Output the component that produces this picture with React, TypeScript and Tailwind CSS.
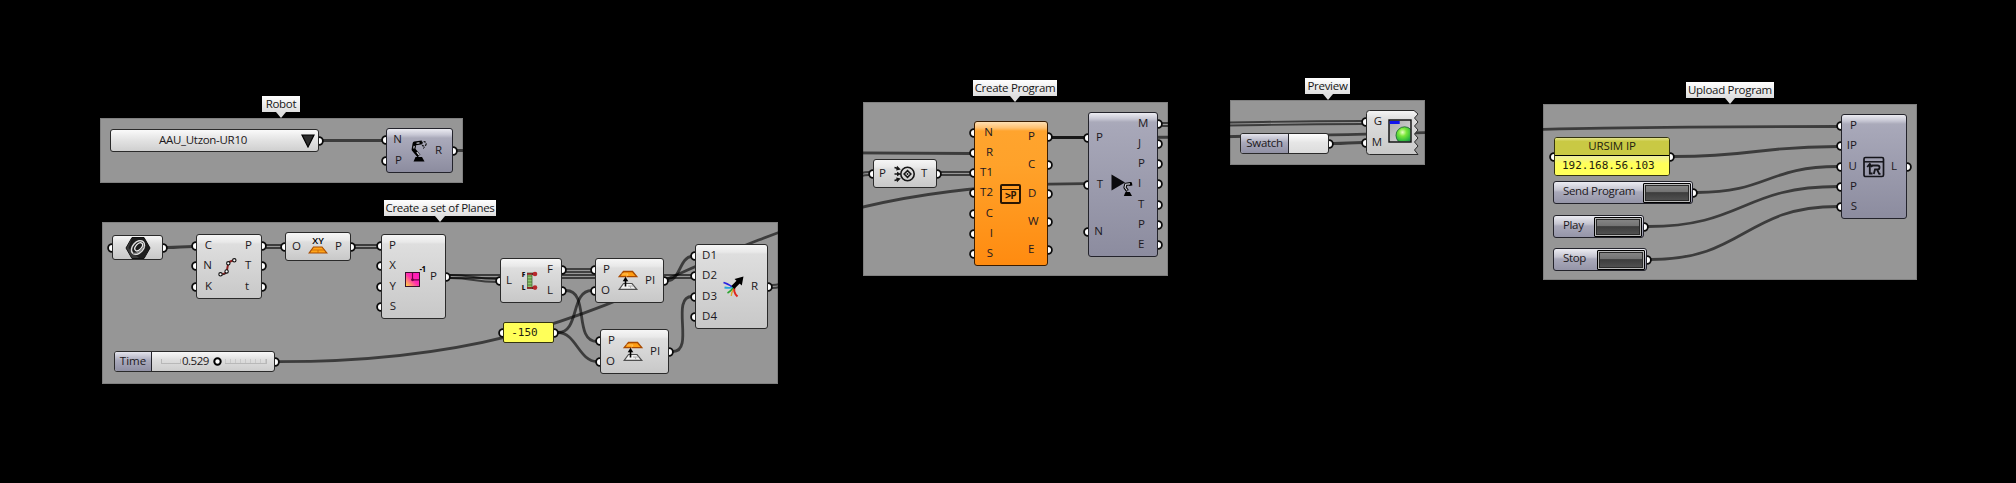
import type { ReactNode } from "react";
import { clsx } from "clsx";

const FONT = "font-['Open_Sans','Noto_Sans',sans-serif]";

type Tone = "light" | "violet" | "orange";

const TONES: Record<Tone, string> = {
  light:
    "border-[#2a2a2a] bg-[linear-gradient(180deg,#f6f6f6_0px,#e9e9e9_7px,#dedede_9px,#c8c8c8_100%)]",
  violet:
    "border-[#23232b] bg-[linear-gradient(180deg,#ececf2_0px,#c6c6d3_6px,#aaaaba_9px,#a8a8b9_12px,#8c8c9f_100%)]",
  orange:
    "border-[#3a1c00] bg-[linear-gradient(180deg,#ffe0b4_0px,#ffc070_6px,#ffa42e_9px,#ffa22a_30%,#ff8b10_100%)]",
};

function Port({ side, className }: { side: "in" | "out"; className?: string }) {
  return (
    <svg
      width="5"
      height="10"
      viewBox={side === "in" ? "0 0 5 10" : "5 0 5 10"}
      className={clsx("block shrink-0", className)}
    >
      <circle cx="5" cy="5" r="3.9" fill="#fff" stroke="#0a0a0a" strokeWidth="1.8" />
    </svg>
  );
}

function Group({ className }: { className: string }) {
  return <section className={clsx("absolute border border-[#808080] bg-[#969696]", className)} />;
}

function Tag({ className, children }: { className: string; children: string }) {
  return (
    <div className={clsx("absolute flex flex-col items-center", className)}>
      <div className="flex h-4 w-full items-center justify-center bg-gradient-to-b from-white to-[#dedede] whitespace-nowrap text-[11.5px] leading-4 tracking-[-0.3px] text-[#161616]">
        {children}
      </div>
      <svg width="12" height="6" viewBox="0 0 12 6" className="block">
        <path d="M1 0H11L6 6Z" fill="#dedede" />
      </svg>
    </div>
  );
}

type NodeProps = {
  className: string;
  tone?: Tone;
  ins?: string[];
  outs?: string[];
  inWidth?: string;
  outWidth?: string;
  children?: ReactNode;
};

function Node({
  className,
  tone = "light",
  ins = [],
  outs = [],
  inWidth = "w-[15px]",
  outWidth = "w-[15px]",
  children,
}: NodeProps) {
  return (
    <article
      className={clsx(
        "absolute flex rounded-[3px] border py-px text-[11.5px] leading-4 text-[#1c1820]",
        TONES[tone],
        className,
      )}
    >
      <div className={clsx("flex shrink-0 flex-col", inWidth)}>
        {ins.map((label, i) => (
          <div key={i} className="flex flex-1 items-center justify-between">
            <Port side="in" className="-ml-[6px]" />
            <span className="-mt-[2px]">{label}</span>
          </div>
        ))}
      </div>
      <div className="flex min-w-0 flex-1 items-center justify-center">{children}</div>
      <div className={clsx("flex shrink-0 flex-col", outWidth)}>
        {outs.map((label, i) => (
          <div key={i} className="flex flex-1 items-center justify-between">
            <span className="-mt-[2px]">{label}</span>
            <Port side="out" className="-mr-[6px]" />
          </div>
        ))}
      </div>
    </article>
  );
}

function Icon({ children, className }: { children: ReactNode; className?: string }) {
  return (
    <svg width="24" height="24" viewBox="0 0 24 24" fill="none" className={clsx("block shrink-0", className)}>
      {children}
    </svg>
  );
}

const RobotIcon = () => (
  <Icon>
    <path d="M6.5 22.5L8.5 18H15L17.5 22.5Z" fill="#000" />
    <path d="M12 17L6.5 10.5L7.5 4.5L15 3.4" stroke="#000" strokeWidth="3.8" strokeLinejoin="round" />
    <path d="M9.8 13.2L12.5 16.4M7.2 6.8L6.8 9.5M9.5 4.3L12.5 3.9" stroke="#dcdce6" strokeWidth="1.1" />
    <circle cx="17" cy="4.8" r="2.2" stroke="#111" strokeWidth="1.2" strokeDasharray="2 1" />
    <path d="M16 9.5L17.8 8" stroke="#111" />
  </Icon>
);

const DivideIcon = () => (
  <Icon>
    <path d="M3.5 19.5C8 19 9 18 9.7 16.3C10.5 13 10.6 10.5 11.5 8C12.5 6 14 6 17.5 5" stroke="#8c2020" strokeWidth="2" />
    <path d="M4 20C9 19.5 10 18 10.5 15" stroke="#222" strokeWidth=".8" />
    {[
      [3.5, 19.3],
      [9.6, 16.4],
      [11.3, 8.3],
      [17.3, 5.3],
    ].map(([x, y]) => (
      <circle key={x} cx={x} cy={y} r="1.7" fill="#fff" stroke="#111" strokeWidth="1.1" />
    ))}
  </Icon>
);

const XyIcon = () => (
  <div className="-mt-[3px] flex flex-col items-center">
    <span className="h-[10px] text-[9.5px] leading-[9px] font-semibold text-black">XY</span>
    <svg width="20" height="8" viewBox="0 0 20 8" className="block">
      <path d="M5.5 1H14L18.8 7H1.2Z" fill="#ffa51a" stroke="#a84d00" strokeWidth="1.2" />
      <path d="M3.5 4H16.5M10 4V7" stroke="#c86400" strokeWidth=".8" />
    </svg>
  </div>
);

const PlaneIcon = () => (
  <div className="flex items-start pt-[2px]">
    <svg width="17" height="17" viewBox="0 0 17 17" className="mt-[3px] block shrink-0">
      <defs>
        <linearGradient id="plane" x1="0" y1="1" x2="1" y2="0">
          <stop offset="0" stopColor="#ffe636" />
          <stop offset=".5" stopColor="#ff2cae" />
          <stop offset="1" stopColor="#ff12c0" />
        </linearGradient>
      </defs>
      <rect x="1.5" y="1.5" width="14" height="14" fill="url(#plane)" stroke="#38102c" />
      <path d="M8.5 2V8.8H15" fill="none" stroke="#6d0048" strokeWidth="1.2" />
      <circle cx="8.5" cy="8.8" r="1.4" fill="#6d0048" />
    </svg>
    <span className="-mt-[4px] -mr-[4px] -ml-[2px] text-[8px] leading-[9px] font-bold tracking-[-0.5px] text-black">-1</span>
  </div>
);

const ListIcon = () => (
  <Icon>
    <text x="3.8" y="8" fontSize="6.5" fontWeight="800" fill="#111">F</text>
    <text x="3.8" y="20.5" fontSize="6.5" fontWeight="800" fill="#111">L</text>
    <rect x="9.5" y="4" width="4.5" height="15.5" fill="#8cc56c" stroke="#4c6b3c" strokeWidth=".8" />
    <path d="M9.5 7H14M9.5 10H14M9.5 13H14M9.5 16H14" stroke="#3f6a30" strokeWidth=".8" />
    <path d="M9 4.8H16M9 18.8H16" stroke="#8e2626" strokeWidth="1.8" />
    <path d="M14 4.8H18M14 18.8H18" stroke="#5a2020" strokeWidth="2.2" />
    <circle cx="17" cy="5" r="2.3" fill="#b8282c" />
    <circle cx="17" cy="18.6" r="2.3" fill="#b8282c" />
  </Icon>
);

const OffsetIcon = () => (
  <Icon>
    <path d="M7.5 2.5H16.5L20.8 7.7H3.2Z" fill="#ff9d12" stroke="#a84a00" strokeWidth="1.3" />
    <path d="M5.5 5H12L10.5 7.5" stroke="#ffc766" strokeWidth=".9" />
    <path d="M7.5 14.5H16L20.8 20.3H3.2Z" fill="#f1f1f1" stroke="#4f4f4f" strokeWidth="1.2" />
    <path d="M12 17H17.5M14 17L15 19.5" stroke="#a0a0a0" strokeWidth=".8" />
    <path d="M9.5 17.5V10" stroke="#000" strokeWidth="1.6" />
    <path d="M6.7 12.2L9.5 7.8L12.3 12.2Z" fill="#000" />
  </Icon>
);

const MergeIcon = () => (
  <Icon>
    <path d="M1.5 7.5C6 9 8 9.5 11 13" stroke="#2a22e0" strokeWidth="1.8" />
    <path d="M2.5 12.5C7 13.5 9 12.5 12 12.5" stroke="#26a6d8" strokeWidth="1.8" />
    <path d="M5.5 18C9 16 9.5 14.5 13 11.5" stroke="#27a52d" strokeWidth="1.6" />
    <path d="M9.3 21C9.5 17 11 14.5 13 12.5" stroke="#d9a52a" strokeWidth="1.4" />
    <path d="M15.5 21.5C11.8 18 12 15.5 12.5 12" stroke="#df251c" strokeWidth="1.9" />
    <path d="M10.8 12.5L17 6.3" stroke="#000" strokeWidth="4.2" />
    <path d="M12.5 4L21.5 1.5L19.8 10.5Z" fill="#000" />
  </Icon>
);

const TargetIcon = () => (
  <Icon>
    <circle cx="15.5" cy="12" r="6.7" stroke="#161616" strokeWidth="1.6" />
    <path d="M15.5 8.6L18.9 12L15.5 15.4L12.1 12Z" stroke="#161616" strokeWidth="1.5" />
    <circle cx="15.5" cy="12" r=".9" fill="#161616" />
    <path d="M2.5 5.5L6 6.5M2.5 12H6M2.5 18.5L6 17.5" stroke="#161616" strokeWidth="1.5" />
    <path d="M5 3.8L8.8 7.4L4.2 8.4ZM5 9.8L9 12L5 14.2ZM4.2 15.6L8.8 16.6L5 20.2Z" fill="#161616" />
  </Icon>
);

const ProgramIcon = () => (
  <div className="flex h-5 w-[21px] shrink-0 flex-col rounded-[2px] border-2 border-[#2a1602]">
    <div className="h-1 shrink-0 border-b border-[#2a1602]" />
    <div className="flex flex-1 items-center justify-center font-['DejaVu_Sans_Mono',monospace] text-[10px] leading-none font-bold tracking-[-0.5px] text-[#2a1602]">
      &gt;P
    </div>
  </div>
);

const SimulateIcon = () => (
  <Icon>
    <path d="M2.5 1.5L16 9.5L2.5 17.5Z" fill="#0a0a0d" />
    <path d="M18.5 18L16 14.5L16.8 11.3L21.5 10.7L21.8 12.8" stroke="#000" strokeWidth="3.2" strokeLinejoin="round" />
    <path d="M18.3 17.5L16 14.5L16.8 11.3L21 10.9" stroke="#d6d6df" strokeWidth="1.1" />
    <path d="M14.8 23L16.5 19H20.8L23 23Z" fill="#000" />
  </Icon>
);

const PreviewIcon = () => (
  <Icon>
    <defs>
      <radialGradient id="ball" cx=".38" cy=".32" r=".75">
        <stop offset="0" stopColor="#eaffc4" />
        <stop offset=".3" stopColor="#7be83a" />
        <stop offset=".65" stopColor="#35bd3c" />
        <stop offset="1" stopColor="#087a53" />
      </radialGradient>
      <linearGradient id="pane" x1="0" y1="0" x2="1" y2="1">
        <stop offset="0" stopColor="#a9a9a9" />
        <stop offset="1" stopColor="#dedede" />
      </linearGradient>
      <clipPath id="frame">
        <rect x="1.5" y="1.5" width="21" height="21" />
      </clipPath>
    </defs>
    <rect x="1" y="1" width="22" height="22" fill="url(#pane)" />
    <circle cx="16.6" cy="16.4" r="8.6" fill="url(#ball)" stroke="#246b34" strokeWidth=".9" clipPath="url(#frame)" />
    <rect x="1" y="1" width="22" height="22" stroke="#0a0a0a" strokeWidth="1.4" />
    <rect x="1.7" y="2" width="10" height="3" fill="#1114ee" />
  </Icon>
);

const UploadIcon = () => (
  <Icon>
    <rect x="2" y="2.5" width="19.5" height="19" rx="1.5" stroke="#14141a" strokeWidth="1.7" />
    <path d="M2 6.8H21.5" stroke="#14141a" strokeWidth="1.5" />
    <path d="M5.2 12L7.8 9L10.2 12M7.8 9.5V18.5H10.5" stroke="#14141a" strokeWidth="1.8" />
    <path d="M9.8 10.5H15.5C18.2 10.5 18.2 14.4 15.5 14.4H13L11.8 19M15 14.4L17.2 18.8H18.5" stroke="#14141a" strokeWidth="1.8" />
  </Icon>
);

const GeometryIcon = () => (
  <svg width="26" height="24" viewBox="0 0 26 24" fill="none" className="block">
    <path d="M7 1.5H19L25 12L19 22.5H7L1 12Z" fill="#1d1d1d" stroke="#111" />
    <path d="M7 2L1.5 12L7 22H14L3.5 12Z" fill="#3a3a3a" />
    <ellipse cx="13" cy="11.5" rx="7.8" ry="5.4" transform="rotate(-48 13 11.5)" stroke="#dcdcdc" strokeWidth="1.5" />
    <ellipse cx="13.7" cy="10.8" rx="4.8" ry="2.8" transform="rotate(-48 13.7 10.8)" stroke="#ededed" strokeWidth="1.3" />
    <path d="M8 17.5C12 18 16 15 19 10" stroke="#8a8a8a" strokeWidth="1.4" />
  </svg>
);

type WireProps = { from: [number, number]; to: [number, number]; bend?: number; twin?: boolean };

function Wire({ from: [x1, y1], to: [x2, y2], bend, twin = false }: WireProps) {
  const b = bend ?? (x2 - x1) / 2;
  const curve = (dy: number) =>
    `M${x1} ${y1 + dy}C${x1 + b} ${y1 + dy} ${x2 - b} ${y2 + dy} ${x2} ${y2 + dy}`;
  return twin ? (
    <>
      <path d={curve(-1.5)} strokeWidth="1.9" />
      <path d={curve(1.5)} strokeWidth="1.9" />
    </>
  ) : (
    <path d={curve(0)} strokeWidth="2.8" />
  );
}

function Wires() {
  return (
    <svg width="2016" height="483" viewBox="0 0 2016 483" className="absolute inset-0" fill="none">
      <defs>
        <clipPath id="groups">
          <rect x="101" y="118" width="362" height="65" />
          <rect x="102" y="222" width="676" height="162" />
          <rect x="863" y="102" width="305" height="174" />
          <rect x="1230" y="100" width="195" height="65" />
          <rect x="1543" y="104" width="374" height="176" />
        </clipPath>
      </defs>
      <g clipPath="url(#groups)" stroke="#000" strokeOpacity=".6">
        <Wire from={[323, 140.5]} to={[383, 140.5]} />
        <Wire from={[457, 150.5]} to={[970, 153.5]} />
        <Wire from={[167, 247.5]} to={[193, 246.5]} />
        <Wire from={[266, 246.5]} to={[282, 246.5]} twin />
        <Wire from={[355, 246.5]} to={[378, 246.5]} twin />
        <Wire from={[450, 276.5]} to={[497, 280.5]} twin />
        <Wire from={[450, 276.5]} to={[692, 276.5]} twin />
        <Wire from={[566, 270.5]} to={[592, 270.5]} twin />
        <Wire from={[566, 290.5]} to={[597, 341.5]} bend={24} />
        <Wire from={[558, 332.5]} to={[592, 290.5]} bend={22} />
        <Wire from={[558, 332.5]} to={[597, 361.5]} bend={18} />
        <Wire from={[668, 280.5]} to={[692, 256.5]} bend={12} />
        <Wire from={[673, 351.5]} to={[692, 296.5]} bend={22} />
        <Wire from={[279, 361.7]} to={[1084, 183.7]} />
        <Wire from={[772, 286.5]} to={[869, 173.5]} twin />
        <Wire from={[941, 173.5]} to={[970, 173.5]} twin />
        <Wire from={[1052, 137.5]} to={[1085, 137.5]} />
        <Wire from={[1052, 137.5]} to={[1837, 126.5]} />
        <Wire from={[1162, 124.5]} to={[1363, 122.5]} twin />
        <Wire from={[1333, 143.5]} to={[1363, 142.5]} />
        <Wire from={[1674, 156.5]} to={[1838, 146.5]} />
        <Wire from={[1697, 192.5]} to={[1838, 166.5]} />
        <Wire from={[1648, 226.5]} to={[1838, 186.5]} />
        <Wire from={[1651, 259.5]} to={[1838, 206.5]} />
      </g>
    </svg>
  );
}

function ButtonNode({ className, label }: { className: string; label: string }) {
  return (
    <div
      className={clsx(
        "absolute flex items-center justify-between rounded-[3px] border border-[#23232b] bg-[linear-gradient(180deg,#ececf2_0px,#c4c4d0_8px,#a9a9ba_10px,#9595a8_100%)] text-[11.5px] leading-4 tracking-[-0.35px] text-[#1c1820]",
        className,
      )}
    >
      <span className="-mt-[3px] pl-[9px] whitespace-nowrap">{label}</span>
      <div className="flex items-center">
        <div className="h-5 w-12 rounded-[1px] border border-black bg-[linear-gradient(180deg,#8a8a8a_0%,#747474_42%,#3d3d3d_48%,#555_100%)] shadow-[inset_0_0_0_1px_#b8b8b8,inset_0_0_0_2px_#2a2a2a]" />
        <Port side="out" className="-mr-[6px] ml-[2px]" />
      </div>
    </div>
  );
}

export default function App() {
  return (
    <main className={clsx("relative h-[483px] w-[2016px] overflow-hidden bg-black", FONT)}>
      <Group className="top-[118px] left-[100px] h-[65px] w-[363px]" />
      <Group className="top-[222px] left-[102px] h-[162px] w-[676px]" />
      <Group className="top-[102px] left-[863px] h-[174px] w-[305px]" />
      <Group className="top-[100px] left-[1230px] h-[65px] w-[195px]" />
      <Group className="top-[104px] left-[1543px] h-[176px] w-[374px]" />
      <Wires />

      <Tag className="top-[96px] left-[262px] w-[38px]">Robot</Tag>
      <Tag className="top-[200px] left-[384px] w-[112px]">Create a set of Planes</Tag>
      <Tag className="top-[80px] left-[973px] w-[84px]">Create Program</Tag>
      <Tag className="top-[78px] left-[1305px] w-[45px]">Preview</Tag>
      <Tag className="top-[82px] left-[1686px] w-[88px]">Upload Program</Tag>

      <div className="absolute top-[129px] left-[110px] flex h-[23px] w-[209px] items-center rounded-[3px] border border-[#2a2a2a] bg-[linear-gradient(180deg,#fafafa,#e4e4e4_45%,#cfcfcf)] text-[11.5px] leading-4 tracking-[-0.3px] text-[#1c1820]">
        <span className="-mt-[2px] flex-1 pl-[48px]">AAU_Utzon-UR10</span>
        <svg width="14" height="14" viewBox="0 0 14 14" className="block">
          <path d="M1 1H13L7 13Z" fill="#2c2c2c" stroke="#000" strokeWidth="1.2" />
        </svg>
        <Port side="out" className="-mr-[6px] ml-[4px]" />
      </div>
      <Node className="top-[128px] left-[386px] h-[45px] w-[67px]" tone="violet" ins={["N", "P"]} outs={["R"]} outWidth="w-[17px]">
        <RobotIcon />
      </Node>

      <div className="absolute top-[235px] left-[112px] flex h-[25px] w-[51px] items-center justify-between rounded-[3px] border border-[#2a2a2a] bg-[linear-gradient(180deg,#f6f6f6,#dedede_35%,#c8c8c8)]">
        <Port side="in" className="-ml-[6px]" />
        <GeometryIcon />
        <Port side="out" className="-mr-[6px]" />
      </div>
      <Node className="top-[234px] left-[196px] h-[65px] w-[66px]" ins={["C", "N", "K"]} outs={["P", "T", "t"]} outWidth="w-[16px]">
        <DivideIcon />
      </Node>
      <Node className="top-[232px] left-[285px] h-[29px] w-[66px]" ins={["O"]} outs={["P"]}>
        <XyIcon />
      </Node>
      <Node className="top-[234px] left-[381px] h-[85px] w-[65px]" ins={["P", "X", "Y", "S"]} outs={["P"]} inWidth="w-[14px]">
        <PlaneIcon />
      </Node>
      <Node className="top-[258px] left-[500px] h-[45px] w-[62px]" ins={["L"]} outs={["F", "L"]} inWidth="w-[11px]" outWidth="w-[14px]">
        <ListIcon />
      </Node>
      <Node className="top-[258px] left-[595px] h-[45px] w-[69px]" ins={["P", "O"]} outs={["PI"]} inWidth="w-[14px]" outWidth="w-[18px]">
        <OffsetIcon />
      </Node>
      <Node className="top-[329px] left-[600px] h-[45px] w-[69px]" ins={["P", "O"]} outs={["PI"]} inWidth="w-[14px]" outWidth="w-[18px]">
        <OffsetIcon />
      </Node>
      <Node className="top-[244px] left-[695px] h-[85px] w-[73px]" ins={["D1", "D2", "D3", "D4"]} outs={["R"]} inWidth="w-[21px]" outWidth="w-[16px]">
        <MergeIcon />
      </Node>

      <div className="absolute top-[322px] left-[503px] flex h-[21px] w-[51px] items-center justify-between rounded-[2px] border border-[#33330f] bg-[#ffff59] font-['DejaVu_Sans_Mono',monospace] text-[11px] leading-4 text-[#1e1e10]">
        <Port side="in" className="-ml-[6px]" />
        <span className="mr-[8px]">-150</span>
        <Port side="out" className="-mr-[6px]" />
      </div>

      <div className="absolute top-[351px] left-[114px] flex h-[21px] w-[161px] items-center rounded-[3px] border border-[#2a2a2a] bg-[linear-gradient(180deg,#f8f8f8,#dcdcdc_45%,#cdcdcd)] text-[11.5px] leading-4 text-[#1c1820]">
        <div className="flex h-full w-[37px] items-center justify-center rounded-l-[2px] border-r border-[#23232b] bg-[linear-gradient(180deg,#e4e4ec,#a9a9bb_45%,#9090a4)]">
          <span className="-mt-[2px]">Time</span>
        </div>
        <div className="flex flex-1 items-center pl-[9px]">
          <div className="h-[5px] w-5 border-x border-b border-[#b8b8b8]" />
          <span className="-mt-[2px] ml-[1px] tracking-[-0.5px]">0.529</span>
          <svg width="9" height="9" viewBox="0 0 9 9" className="ml-[4px] block">
            <circle cx="4.5" cy="4.5" r="3.2" fill="#fff" stroke="#000" strokeWidth="2" />
          </svg>
          <div className="ml-[3px] h-[5px] w-[42px] border-r border-b border-[#b8b8b8] bg-[repeating-linear-gradient(90deg,#c8c8c8_0px,#c8c8c8_1px,transparent_1px,transparent_5px)]" />
        </div>
        <Port side="out" className="-mr-[6px]" />
      </div>

      <Node className="top-[159px] left-[873px] h-[29px] w-[64px]" ins={["P"]} outs={["T"]} inWidth="w-[12px]">
        <TargetIcon />
      </Node>
      <Node className="top-[121px] left-[974px] h-[145px] w-[74px]" tone="orange" ins={["N", "R", "T1", "T2", "C", "I", "S"]} outs={["P", "C", "D", "W", "E"]} inWidth="w-[18px]" outWidth="w-[19px]">
        <ProgramIcon />
      </Node>
      <Node className="top-[112px] left-[1088px] h-[145px] w-[70px]" tone="violet" ins={["P", "T", "N"]} outs={["M", "J", "P", "I", "T", "P", "E"]} inWidth="w-[14px]" outWidth="w-[19px]">
        <SimulateIcon />
      </Node>

      <div className="absolute top-[133px] left-[1240px] flex h-[21px] w-[89px] items-center justify-between rounded-[3px] border border-[#2a2a2a] bg-[linear-gradient(180deg,#fff,#e6e6e6_45%,#dcdcdc)] text-[11.5px] leading-4 tracking-[-0.3px] text-[#1c1820]">
        <div className="flex h-full w-[48px] items-center justify-center rounded-l-[2px] border-r border-[#23232b] bg-[linear-gradient(180deg,#e4e4ec,#a9a9bb_45%,#9090a4)]">
          <span className="-mt-[2px]">Swatch</span>
        </div>
        <Port side="out" className="-mr-[6px]" />
      </div>
      <div className="absolute top-[110px] left-[1366px] flex h-[45px] w-[53px] text-[11.5px] leading-4 text-[#1c1820]">
        <svg width="53" height="45" viewBox="0 0 53 45" className="absolute inset-0">
          <defs>
            <linearGradient id="torn" x1="0" y1="0" x2="0" y2="1">
              <stop offset="0" stopColor="#f6f6f6" />
              <stop offset=".2" stopColor="#dedede" />
              <stop offset="1" stopColor="#c8c8c8" />
            </linearGradient>
          </defs>
          <path
            d="M3.5 .5H48L52 4L48.5 8L52 12L48.5 16L52 20L48.5 24L52 28L48.5 32L52 36L48.5 40L52 44.5H3.5Q.5 44.5 .5 41.5V3.5Q.5 .5 3.5 .5Z"
            fill="url(#torn)"
            stroke="#2a2a2a"
          />
        </svg>
        <div className="relative flex w-4 flex-col py-[2px]">
          {["G", "M"].map((label) => (
            <div key={label} className="flex flex-1 items-center justify-between">
              <Port side="in" className="-ml-[5px]" />
              <span className="-mt-[2px]">{label}</span>
            </div>
          ))}
        </div>
        <div className="relative flex flex-1 items-center pb-[3px] pl-[6px]">
          <PreviewIcon />
        </div>
      </div>

      <div className="absolute top-[137px] left-[1554px] flex h-[39px] w-[116px] items-center rounded-[3px] border border-[#33330f] bg-[#ffff59] text-[#1e1e10]">
        <Port side="in" className="-ml-[6px]" />
        <div className="mx-px flex h-full flex-1 flex-col overflow-hidden rounded-[2px]">
          <div className="flex h-[18px] shrink-0 items-center justify-center border-b border-black bg-[linear-gradient(180deg,#e3e38a,#c9c944_20%,#c9c944)] text-[11.5px] leading-4 tracking-[-0.1px]">
            <span className="-mt-[2px]">URSIM IP</span>
          </div>
          <div className="flex-1 bg-[linear-gradient(180deg,#ececa0,#ffff59_40%)] pl-[7px] font-['DejaVu_Sans_Mono',monospace] text-[11px] leading-[19px]">
            192.168.56.103
          </div>
        </div>
        <Port side="out" className="-mr-[6px]" />
      </div>
      <ButtonNode className="top-[181px] left-[1553px] h-[23px] w-[140px]" label="Send Program" />
      <ButtonNode className="top-[215px] left-[1553px] h-[23px] w-[91px]" label="Play" />
      <ButtonNode className="top-[248px] left-[1553px] h-[23px] w-[94px]" label="Stop" />

      <Node className="top-[114px] left-[1841px] h-[105px] w-[66px]" tone="violet" ins={["P", "IP", "U", "P", "S"]} outs={["L"]}>
        <UploadIcon />
      </Node>
    </main>
  );
}
